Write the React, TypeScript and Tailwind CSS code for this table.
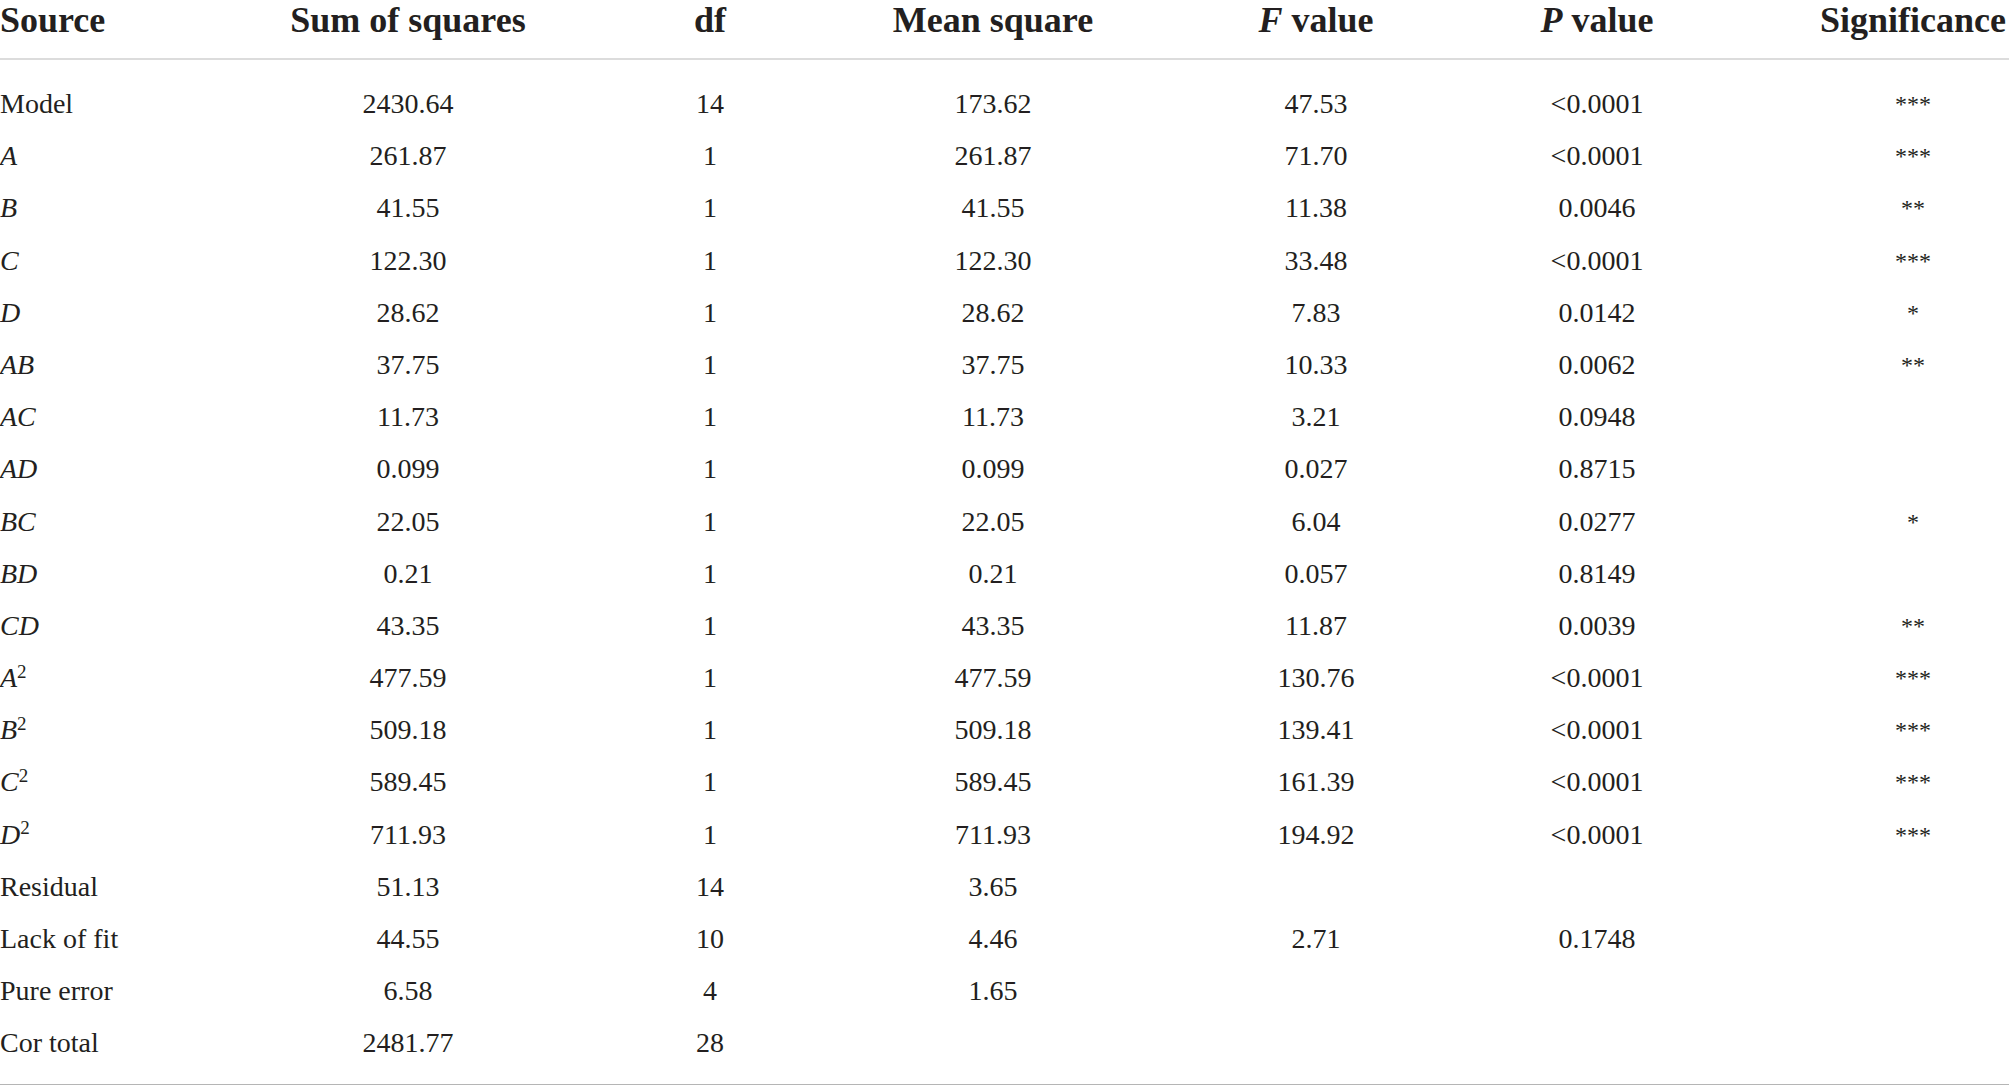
import React from 'react';

type Row = {
  source: React.ReactNode;
  ss: string;
  df: string;
  ms?: string;
  f?: string;
  p?: string;
  sig?: string;
};

const term = (t: string, sq = false) => (
  <span>
    <i>{t}</i>
    {sq && <sup className="text-[19px] not-italic">2</sup>}
  </span>
);

const rows: Row[] = [
  { source: 'Model', ss: '2430.64', df: '14', ms: '173.62', f: '47.53', p: '<0.0001', sig: '***' },
  { source: term('A'), ss: '261.87', df: '1', ms: '261.87', f: '71.70', p: '<0.0001', sig: '***' },
  { source: term('B'), ss: '41.55', df: '1', ms: '41.55', f: '11.38', p: '0.0046', sig: '**' },
  { source: term('C'), ss: '122.30', df: '1', ms: '122.30', f: '33.48', p: '<0.0001', sig: '***' },
  { source: term('D'), ss: '28.62', df: '1', ms: '28.62', f: '7.83', p: '0.0142', sig: '*' },
  { source: term('AB'), ss: '37.75', df: '1', ms: '37.75', f: '10.33', p: '0.0062', sig: '**' },
  { source: term('AC'), ss: '11.73', df: '1', ms: '11.73', f: '3.21', p: '0.0948' },
  { source: term('AD'), ss: '0.099', df: '1', ms: '0.099', f: '0.027', p: '0.8715' },
  { source: term('BC'), ss: '22.05', df: '1', ms: '22.05', f: '6.04', p: '0.0277', sig: '*' },
  { source: term('BD'), ss: '0.21', df: '1', ms: '0.21', f: '0.057', p: '0.8149' },
  { source: term('CD'), ss: '43.35', df: '1', ms: '43.35', f: '11.87', p: '0.0039', sig: '**' },
  { source: term('A', true), ss: '477.59', df: '1', ms: '477.59', f: '130.76', p: '<0.0001', sig: '***' },
  { source: term('B', true), ss: '509.18', df: '1', ms: '509.18', f: '139.41', p: '<0.0001', sig: '***' },
  { source: term('C', true), ss: '589.45', df: '1', ms: '589.45', f: '161.39', p: '<0.0001', sig: '***' },
  { source: term('D', true), ss: '711.93', df: '1', ms: '711.93', f: '194.92', p: '<0.0001', sig: '***' },
  { source: 'Residual', ss: '51.13', df: '14', ms: '3.65' },
  { source: 'Lack of fit', ss: '44.55', df: '10', ms: '4.46', f: '2.71', p: '0.1748' },
  { source: 'Pure error', ss: '6.58', df: '4', ms: '1.65' },
  { source: 'Cor total', ss: '2481.77', df: '28' },
];

const cols = 'grid grid-cols-[127px_562px_42px_524px_122px_440px_192px]';

const Cell: React.FC<{ children?: React.ReactNode }> = ({ children }) => (
  <div className="flex justify-center whitespace-nowrap">{children}</div>
);

const App: React.FC = () => {
  return (
    <div
      className="w-[2009px] h-[1087px] overflow-hidden bg-white text-[#231f20]"
      style={{ fontFamily: '"Liberation Serif", "Times New Roman", serif' }}
    >
      <div className={`${cols} h-[60px] border-b-2 border-[#dcdcdc] text-[36px] leading-[40px] font-bold items-start`}>
        <div className="whitespace-nowrap">Source</div>
        <Cell>Sum of squares</Cell>
        <Cell>df</Cell>
        <Cell>Mean square</Cell>
        <Cell>
          <span><i>F</i> value</span>
        </Cell>
        <Cell>
          <span><i>P</i> value</span>
        </Cell>
        <Cell>Significance</Cell>
      </div>

      <div className="pt-[18px] pb-[14px] border-b border-[#b5b5b5] text-[28px]">
        {rows.map((r, i) => (
          <div key={i} className={`${cols} h-[52.2px] leading-[52.2px]`}>
            <div className="whitespace-nowrap">{r.source}</div>
            <Cell>{r.ss}</Cell>
            <Cell>{r.df}</Cell>
            <Cell>{r.ms ?? ''}</Cell>
            <Cell>{r.f ?? ''}</Cell>
            <Cell>{r.p ?? ''}</Cell>
            <Cell>
              <span className="text-[24px]">{r.sig ?? ''}</span>
            </Cell>
          </div>
        ))}
      </div>
    </div>
  );
};

export default App;
